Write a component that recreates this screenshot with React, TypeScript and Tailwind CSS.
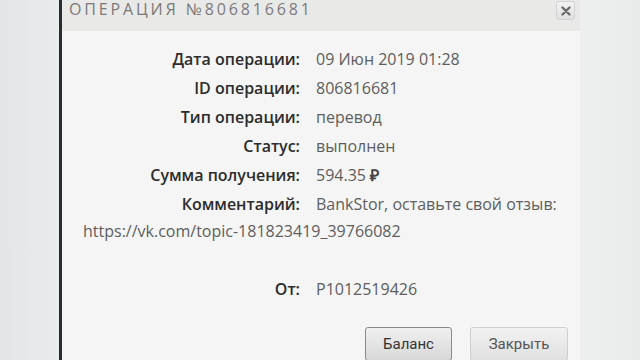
import React from "react";

const rows: [string, React.ReactNode][] = [
  ["Дата операции:", "09 Июн 2019 01:28"],
  ["ID операции:", "806816681"],
  ["Тип операции:", "перевод"],
  ["Статус:", "выполнен"],
  ["Сумма получения:", <span>594.35 <span className="font-bold text-[#444]">₽</span></span>],
  ["Комментарий:", "BankStor, оставьте свой отзыв:"],
];

export default function App() {
  return (
    <div className="w-[640px] h-[360px] overflow-hidden flex bg-[#e6eaeb]" style={{ fontFamily: "'Open Sans', 'Liberation Sans', sans-serif" }}>
      <div className="w-[59px] shrink-0 bg-gradient-to-r from-[#e2e6e7] to-[#e9eced]" />
      <div className="w-[3px] shrink-0 bg-[#2a2d2e]" />
      <div className="w-[518px] shrink-0 flex flex-col bg-[#f4f5f4]">
        <div className="h-[31px] shrink-0 bg-[#e9e9e8] flex items-start justify-between pl-[7px] pr-[5px]">
          <div className="text-[16px] leading-[18px] tracking-[2.85px] text-[#7a7a7a]">ОПЕРАЦИЯ №806816681</div>
          <div className="mt-[1px] w-[19px] h-[19px] rounded-[3px] border border-[#d3d3d3] bg-gradient-to-b from-[#f3f3f3] to-[#e0e0e0] flex items-center justify-center">
            <svg width="10" height="10" viewBox="0 0 10 10">
              <path d="M1.5 1.5 L8.5 8.5 M8.5 1.5 L1.5 8.5" stroke="#6a6a6a" strokeWidth="2.4" strokeLinecap="round" />
            </svg>
          </div>
        </div>
        <div className="flex flex-col pt-[14px] text-[16px] leading-[29px]">
          {rows.map(([l, v], i) => (
            <div key={i} className="flex">
              <div className="w-[238px] shrink-0 text-right text-[#2c2c2c] font-semibold">{l}</div>
              <div className="pl-[16px] text-[#5e5e5e] whitespace-nowrap">{v}</div>
            </div>
          ))}
          <div className="pl-[21px] text-[#5e5e5e] leading-[25px]">https://vk.com/topic-181823419_39766082</div>
          <div className="flex mt-[31px]">
            <div className="w-[238px] shrink-0 text-right text-[#2c2c2c] font-semibold">От:</div>
            <div className="pl-[16px] text-[#5e5e5e]">P1012519426</div>
          </div>
          <div className="flex justify-end gap-[18px] pr-[12px] mt-[23px]" style={{ fontFamily: "Roboto, 'Liberation Sans', sans-serif" }}>
            <div className="w-[87px] h-[34px] rounded-[3px] border border-[#8a8a8a] bg-gradient-to-b from-[#f0f0f0] to-[#d8d8d8] flex items-center justify-center text-[15px] text-[#333]">Баланс</div>
            <div className="w-[98px] h-[34px] rounded-[3px] border border-[#cfcfcf] bg-gradient-to-b from-[#f2f2f2] to-[#e0e0e0] flex items-center justify-center text-[15px] text-[#555]">Закрыть</div>
          </div>
        </div>
      </div>
      <div className="flex-1 bg-gradient-to-r from-[#eef0ef] to-[#e8ebea]" />
    </div>
  );
}
